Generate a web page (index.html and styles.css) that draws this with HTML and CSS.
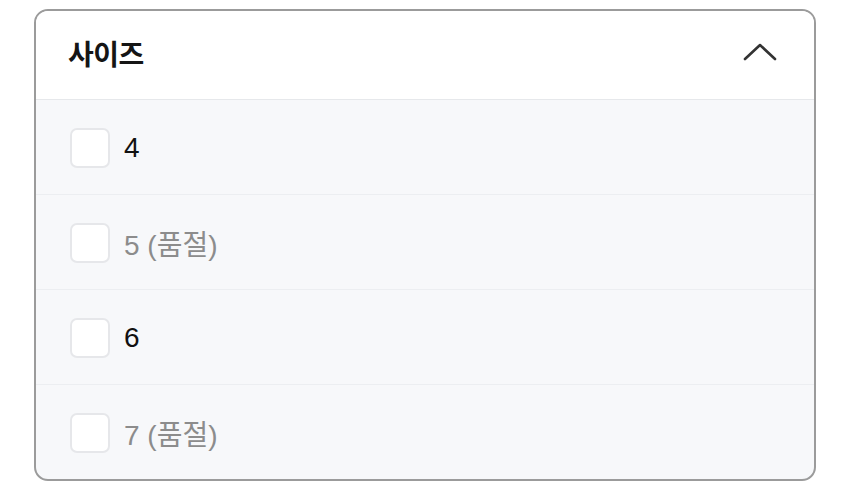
FILE: index.html
```html
<!DOCTYPE html>
<html lang="ko">
<head>
<meta charset="utf-8">
<link rel="stylesheet" href="styles.css">
</head>
<body>
<div class="card">
  <div class="header">
    <span class="title">사이즈</span>
    <svg class="chev" width="34" height="20" viewBox="0 0 34 20"><path d="M2 17 L17 3 L32 17" fill="none" stroke="#333" stroke-width="2.6" stroke-linecap="round" stroke-linejoin="round"/></svg>
  </div>
  <div class="row"><span class="box"></span><span class="label">4</span></div>
  <div class="row"><span class="box"></span><span class="label sold">5 (품절)</span></div>
  <div class="row"><span class="box"></span><span class="label">6</span></div>
  <div class="row last"><span class="box"></span><span class="label sold">7 (품절)</span></div>
</div>
</body>
</html>
```
FILE: styles.css
```css
html, body { margin: 0; background: #fff; }
body { padding: 9px 34px 0 34px; font-family: "Liberation Sans", "Noto Sans CJK KR", sans-serif; }
.card {
  width: 782px;
  height: 472px;
  box-sizing: border-box;
  border: 2px solid #9b9b9b;
  border-radius: 14px;
  overflow: hidden;
  background: #f7f8fa;
  display: flex;
  flex-direction: column;
}
.header {
  height: 88px;
  flex: none;
  background: #fff;
  border-bottom: 1px solid #e6e8eb;
  display: flex;
  align-items: center;
  justify-content: space-between;
  padding: 0 37px 0 32px;
}
.title {
  font-family: "Noto Sans CJK KR", sans-serif;
  font-weight: 700;
  font-size: 28px;
  letter-spacing: -0.5px;
  color: #151515;
  margin-top: -4px;
}
.chev { display: block; margin-top: -6px; }
.row {
  height: 95px;
  flex: none;
  box-sizing: border-box;
  border-bottom: 1px solid #eceef1;
  display: flex;
  align-items: center;
  padding-left: 34px;
  padding-top: 1px;
}
.row.last { border-bottom: none; flex: 1; }
.box {
  width: 40px;
  height: 40px;
  box-sizing: border-box;
  border: 2px solid #e6e7ea;
  border-radius: 7px;
  background: #fff;
  flex: none;
}
.label {
  margin-left: 14px;
  font-size: 28px;
  color: #111;
}
.sold { color: #8c8c8c; }
```
